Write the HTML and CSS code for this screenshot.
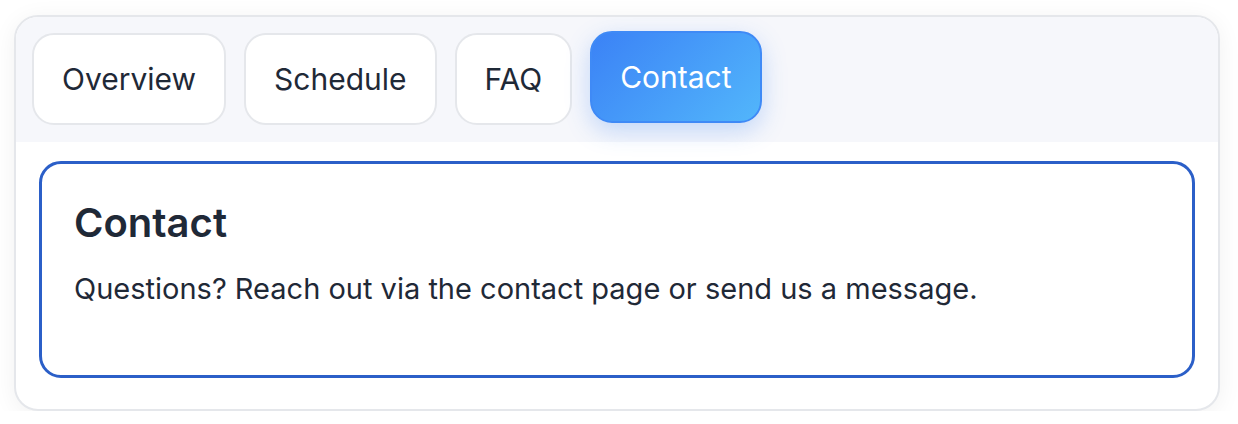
FILE: index.html
```html
<!DOCTYPE html>
<html lang="en">
<head>
    <meta charset="UTF-8">
    <meta name="viewport" content="width=device-width, initial-scale=1.0">
    <title>Tabs</title>
    <link rel="stylesheet" href="styles.css">
</head>
<body>
    <div class="tabs-card">
        <div class="tab-list" role="tablist">
            <button class="tab" role="tab">Overview</button>
            <button class="tab" role="tab">Schedule</button>
            <button class="tab" role="tab">FAQ</button>
            <button class="tab active" role="tab" aria-selected="true">Contact</button>
        </div>
        <div class="tab-body">
            <div class="tab-panel" role="tabpanel">
                <h2>Contact</h2>
                <p>Questions? Reach out via the contact page or send us a message.</p>
            </div>
        </div>
    </div>
</body>
</html>
```

FILE: styles.css
```css
body {
    font-family: Inter, "Noto Sans", sans-serif;
    background: #ffffff;
    color: #1f2937;
    margin: 0;
    padding: 15px 18px 0 14px;
}
.tabs-card {
    border: 2px solid #e5e7eb;
    border-radius: 24px;
    overflow: hidden;
    background: #ffffff;
    box-shadow: 0 4px 24px rgba(0, 0, 0, 0.06);
}
.tab-list {
    display: flex;
    gap: 18px;
    padding: 16px 16px 17px;
    background: #f6f7fb;
}
.tab {
    font-family: inherit;
    font-size: 30px;
    line-height: 44px;
    padding: 22px 28px;
    color: #1f2937;
    background: #ffffff;
    border: 2px solid #e5e7eb;
    border-radius: 22px;
    cursor: pointer;
}
.tab.active {
    color: #ffffff;
    background: linear-gradient(135deg, #3b82f6, #52b6fb);
    border-color: #3f8af6;
    transform: translateY(-2px);
    box-shadow: 0 8px 24px rgba(59, 130, 246, 0.28);
}
.tab-body {
    padding: 19px 23px 31px;
}
.tab-panel {
    border: 3px solid #2b5fc8;
    border-radius: 22px;
    padding: 35px 32px 0;
    height: 176px;
}
.tab-panel h2 {
    font-size: 40px;
    font-weight: 600;
    line-height: 48px;
    margin: 0 0 22px;
}
.tab-panel p {
    font-size: 29px;
    line-height: 40px;
    margin: 0;
}
```
